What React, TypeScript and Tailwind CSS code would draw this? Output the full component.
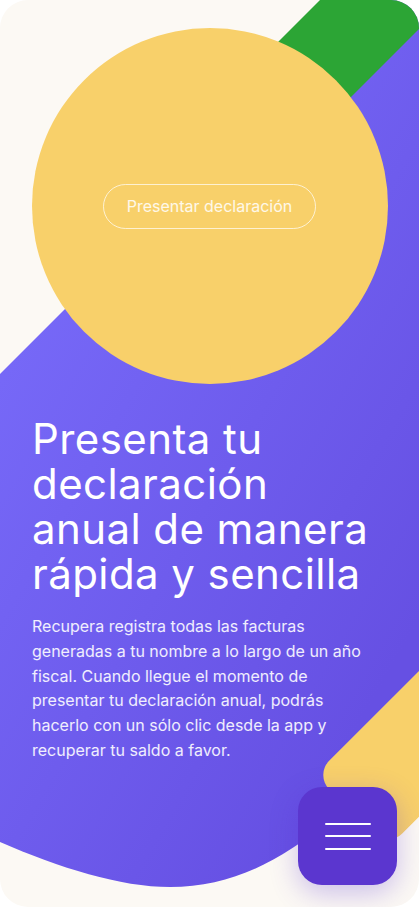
const Backdrop = () => (
  <svg
    className="absolute inset-0 h-full w-full"
    viewBox="0 0 419 907"
    preserveAspectRatio="none"
    aria-hidden="true"
  >
    <defs>
      <linearGradient id="violet" x1="0" y1="380" x2="419" y2="620" gradientUnits="userSpaceOnUse">
        <stop offset="0" stopColor="#7668f7" />
        <stop offset="1" stopColor="#6650e3" />
      </linearGradient>
    </defs>
    {/* violet sheet */}
    <path
      d="M0 374 L374 0 L419 0 L419 740 L330 820 C280 862 230 887 170 887 C120 887 60 868 0 842 Z"
      fill="url(#violet)"
    />
    {/* green strip */}
    <rect x="140" y="180" width="500" height="90.5" transform="rotate(-45 140 180)" fill="#2ca535" />
    {/* yellow strip */}
    <rect x="315" y="775" width="300" height="103" rx="20" transform="rotate(-45 315 775)" fill="#f8d06a" />
  </svg>
)

const App = () => {
  return (
    <div className="min-h-screen bg-white font-['Inter','Noto_Sans',sans-serif]">
      <main className="relative h-[907px] w-full overflow-hidden rounded-[28px] bg-[#fcf9f4]">
        <Backdrop />

        <div className="relative flex flex-col">
          <section className="mx-auto mt-[28px] flex h-[356px] w-[356px] items-center justify-center rounded-full bg-[#f8d06a]">
            <button className="h-[45px] w-[213px] rounded-full border border-white/70 text-[16px] text-white/85">
              Presentar declaración
            </button>
          </section>

          <h1 className="mt-[32px] pr-[45px] pl-[32px] text-[42px] leading-[45px] font-normal tracking-[0.01em] text-white">
            Presenta tu declaración anual de manera rápida y sencilla
          </h1>

          <p className="mt-[18px] pr-[41px] pl-[32px] text-[16px] leading-[24.8px] text-white/90">
            Recupera registra todas las facturas generadas a tu nombre a lo largo de un año fiscal. Cuando llegue el
            momento de presentar tu declaración anual, podrás hacerlo con un sólo clic desde la app y recuperar tu saldo
            a favor.
          </p>
        </div>

        <button
          aria-label="Menú"
          className="absolute right-[22px] bottom-[22px] flex h-[98px] w-[99px] flex-col items-center justify-center gap-[10.5px] rounded-[24px] bg-[#5b36cf] shadow-[0_8px_28px_rgba(91,54,207,0.3)]"
        >
          <span className="block h-[2px] w-[46px] rounded-full bg-white" />
          <span className="block h-[2px] w-[46px] rounded-full bg-white" />
          <span className="block h-[2px] w-[46px] rounded-full bg-white" />
        </button>
      </main>
    </div>
  )
}

export default App
